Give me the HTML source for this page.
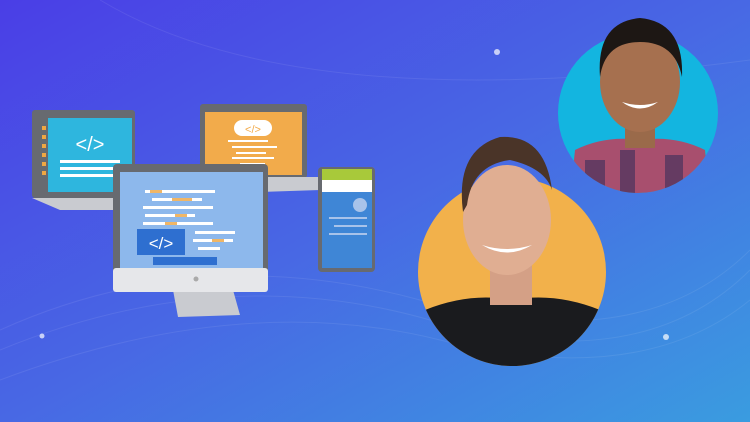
<!DOCTYPE html>
<html><head><style>
html,body{margin:0;padding:0;width:750px;height:422px;overflow:hidden}
</style></head><body>
<svg width="750" height="422" viewBox="0 0 750 422" xmlns="http://www.w3.org/2000/svg" font-family="Liberation Sans, sans-serif">
<defs>
<linearGradient id="bg" x1="0" y1="0" x2="1" y2="1">
<stop offset="0" stop-color="#4a3ee6"/>
<stop offset="0.5" stop-color="#4868e4"/>
<stop offset="1" stop-color="#3a9ce0"/>
</linearGradient>
<clipPath id="c1"><circle cx="512" cy="272" r="94"/></clipPath>
<clipPath id="c2"><circle cx="638" cy="113" r="80"/></clipPath>
</defs>
<rect width="750" height="422" fill="url(#bg)"/>
<g fill="none" stroke="#ffffff" stroke-opacity="0.08">
<path d="M0 330 Q200 240 420 300 T750 250"/>
<path d="M0 350 Q220 260 430 320 T750 270"/>
<path d="M0 380 Q240 290 440 340 T750 300"/>
<path d="M100 0 Q300 120 750 60"/>
</g>
<g fill="#fff" opacity="0.7"><circle cx="497" cy="52" r="3"/><circle cx="666" cy="337" r="3"/><circle cx="42" cy="336" r="2.5"/></g>

<!-- left laptop -->
<rect x="32" y="110" width="103" height="88" rx="3" fill="#676a70"/>
<rect x="48" y="118" width="84" height="74" fill="#2eb6de"/>
<g fill="#f0a742"><rect x="42" y="126" width="4" height="4"/><rect x="42" y="135" width="4" height="4"/><rect x="42" y="144" width="4" height="4"/><rect x="42" y="153" width="4" height="4"/><rect x="42" y="162" width="4" height="4"/><rect x="42" y="171" width="4" height="4"/></g>
<text x="90" y="151" font-size="20" fill="#fff" text-anchor="middle">&lt;/&gt;</text>
<g fill="#fff"><rect x="60" y="160" width="60" height="3"/><rect x="60" y="167" width="55" height="3"/><rect x="60" y="174" width="55" height="3"/></g>
<path d="M32 198 L135 198 L135 210 L60 210 Z" fill="#c9cbd0"/>

<!-- orange laptop -->
<rect x="200" y="104" width="107" height="74" rx="3" fill="#676a70"/>
<rect x="205" y="112" width="97" height="63" fill="#f2ab4b"/>
<rect x="234" y="120" width="38" height="16" rx="8" fill="#fff"/>
<text x="253" y="133" font-size="11" fill="#f2ab4b" text-anchor="middle">&lt;/&gt;</text>
<g fill="#fff"><rect x="228" y="140" width="40" height="2"/><rect x="232" y="146" width="45" height="2"/><rect x="236" y="152" width="30" height="2"/><rect x="232" y="157" width="42" height="2"/><rect x="240" y="163" width="25" height="2"/></g>
<path d="M200 177 L320 177 L320 190 L260 192 Z" fill="#c9cbd0"/>

<!-- phone -->
<rect x="318" y="167" width="57" height="105" rx="4" fill="#676a70"/>
<rect x="322" y="169" width="50" height="11" fill="#a8c93a"/>
<rect x="322" y="180" width="50" height="12" fill="#fff"/>
<rect x="322" y="192" width="50" height="76" fill="#3f86d6"/>
<circle cx="360" cy="205" r="7" fill="#a8c3ea"/>
<g fill="#a8c3ea"><rect x="329" y="217" width="38" height="2"/><rect x="334" y="225" width="33" height="2"/><rect x="329" y="233" width="38" height="2"/></g>

<!-- monitor -->
<path d="M173 290 L233 290 L240 315 L178 317 Z" fill="#c9cbd0"/>
<rect x="113" y="164" width="155" height="126" rx="4" fill="#676a70"/>
<rect x="113" y="268" width="155" height="24" rx="3" fill="#e6e7ea"/>
<circle cx="196" cy="279" r="2.5" fill="#aaa"/>
<rect x="120" y="172" width="143" height="96" fill="#8db8ec"/>
<g fill="#fff"><rect x="145" y="190" width="70" height="3"/><rect x="152" y="198" width="50" height="3"/><rect x="143" y="206" width="70" height="3"/><rect x="145" y="214" width="50" height="3"/><rect x="143" y="222" width="70" height="3"/><rect x="195" y="231" width="40" height="3"/><rect x="193" y="239" width="40" height="3"/><rect x="198" y="247" width="22" height="3"/></g>
<g fill="#f0b666"><rect x="150" y="190" width="12" height="3"/><rect x="172" y="198" width="20" height="3"/><rect x="175" y="214" width="12" height="3"/><rect x="165" y="222" width="12" height="3"/><rect x="212" y="239" width="12" height="3"/></g>
<rect x="137" y="229" width="48" height="26" fill="#2e6fd0"/>
<text x="161" y="249" font-size="17" fill="#fff" text-anchor="middle">&lt;/&gt;</text>
<rect x="153" y="257" width="64" height="8" fill="#2e6fd0"/>

<!-- yellow circle person -->
<circle cx="512" cy="272" r="94" fill="#f2b14b"/>
<g clip-path="url(#c1)">
<path d="M410 380 L425 310 Q470 292 512 300 Q555 292 600 310 L620 380 Z" fill="#1a1b1e"/>
<rect x="490" y="260" width="42" height="45" fill="#d4a086"/>
</g>
<ellipse cx="507" cy="220" rx="44" ry="55" fill="#e0ae92"/>
<path d="M463 212 Q455 150 500 137 Q545 134 552 190 Q545 168 510 160 Q472 165 467 205 Z" fill="#4a3428"/>
<path d="M482 245 Q507 260 532 245 Q507 253 482 245Z" fill="#fff"/>

<!-- cyan circle person -->
<circle cx="638" cy="113" r="80" fill="#13b5e0"/>
<g clip-path="url(#c2)">
<path d="M570 200 L575 150 Q605 135 640 140 Q675 135 705 150 L710 200 Z" fill="#a84f6e"/>
<g fill="#3a2f5a" opacity="0.6"><rect x="585" y="160" width="20" height="40"/><rect x="620" y="150" width="15" height="50"/><rect x="665" y="155" width="18" height="45"/></g>
<rect x="625" y="120" width="30" height="28" fill="#9a6a4a"/>
</g>
<ellipse cx="640" cy="82" rx="40" ry="50" fill="#a6704f"/>
<path d="M600 77 Q596 22 640 18 Q684 22 682 77 Q675 42 640 42 Q605 42 600 77Z" fill="#1d1714"/>
<path d="M622 102 Q640 115 658 102 Q640 108 622 102Z" fill="#fff"/>
</svg>
</body></html>
